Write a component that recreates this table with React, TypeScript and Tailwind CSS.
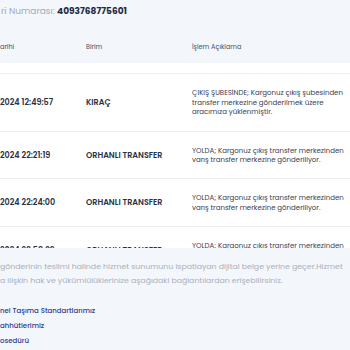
import React from 'react';

const rows = [
    {
        date: '2024 12:49:57',
        unit: 'KIRAÇ',
        desc: 'ÇIKIŞ ŞUBESİNDE; Kargonuz çıkış şubesinden transfer merkezine gönderilmek üzere aracımıza yüklenmiştir.',
        h: 'h-[58px]',
    },
    {
        date: '2024 22:21:19',
        unit: 'ORHANLI TRANSFER',
        desc: 'YOLDA; Kargonuz çıkış transfer merkezinden varış transfer merkezine gönderiliyor.',
        h: 'h-[47px]',
    },
    {
        date: '2024 22:24:00',
        unit: 'ORHANLI TRANSFER',
        desc: 'YOLDA; Kargonuz çıkış transfer merkezinden varış transfer merkezine gönderiliyor.',
        h: 'h-[48px]',
    },
    {
        date: '2024 22:58:22',
        unit: 'ORHANLI TRANSFER',
        desc: 'YOLDA; Kargonuz çıkış transfer merkezinden varış transfer merkezine gönderiliyor.',
        h: 'h-[48px]',
    },
];

const App = () => {
    return (
        <div
            className="w-[350px] h-[350px] overflow-hidden bg-white flex flex-col"
            style={{ fontFamily: 'Poppins, Inter, "Noto Sans", sans-serif' }}
        >
            {/* Header */}
            <div className="h-[63px] shrink-0 bg-[#f3f6fb] flex flex-col">
                <div className="pt-[4px] pl-[1px] text-[9px] leading-[14px] text-[#a4aab6] whitespace-nowrap">
                    ri Numarası: <span className="font-bold text-[#1f2a44]">4093768775601</span>
                </div>
                <div className="mt-auto mb-[11px] grid grid-cols-[86px_106px_1fr] text-[6.5px] leading-[10px] text-[#4a5060]">
                    <div>arihi</div>
                    <div>Birim</div>
                    <div>İşlem Açıklama</div>
                </div>
            </div>

            {/* Table body */}
            <div className="h-[185px] shrink-0 overflow-hidden pt-[10px]">
                {rows.map((r, i) => (
                    <div
                        key={i}
                        className={`grid grid-cols-[86px_106px_1fr] items-center border-t border-[#eceef3] ${r.h}`}
                    >
                        <div className="pt-[1px] text-[8px] font-semibold text-[#2a3144] whitespace-nowrap">{r.date}</div>
                        <div className="pt-[1px] text-[8px] font-semibold text-[#2a3144] whitespace-nowrap">{r.unit}</div>
                        <div className="pr-[4px] text-[7px] leading-[9.5px] text-[#3a4052]">{r.desc}</div>
                    </div>
                ))}
            </div>

            {/* Bottom info */}
            <div className="flex-1 bg-[#f3f6fb] pt-[12px]">
                <p className="text-[7.8px] leading-[14px] text-[#aab0bc] whitespace-nowrap">
                    gönderinin teslimi halinde hizmet sunumunu ispatlayan dijital belge yerine geçer.Hizmet
                    <br />
                    a ilişkin hak ve yükümlülüklerinize aşağıdaki bağlantılardan erişebilirsiniz.
                </p>
                <div className="mt-[17px] flex flex-col gap-[3px] text-[7px] leading-[12px] font-medium text-[#2c3a8e]">
                    <a href="#">nel Taşıma Standartlarımız</a>
                    <a href="#">ahhütlerimiz</a>
                    <a href="#">osedürü</a>
                </div>
            </div>
        </div>
    );
};

export default App;
